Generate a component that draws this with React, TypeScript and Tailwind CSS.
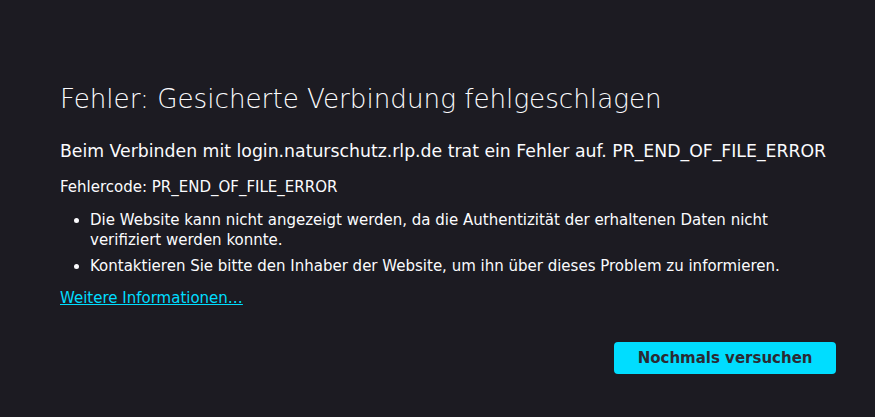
export default function App() {
  return (
    <div
      className="w-[875px] h-[417px] bg-[#1c1b22] text-[#fbfbfe] overflow-hidden"
      style={{ fontFamily: '"DejaVu Sans", sans-serif' }}
    >
      <div className="pl-[60px] pr-[39px] pt-[81px]">
        <h1 className="text-[26.2px] font-extralight leading-[36px] tracking-[0px]">
          Fehler: Gesicherte Verbindung fehlgeschlagen
        </h1>
        <p className="mt-[22px] text-[17.3px] leading-[24px]">
          Beim Verbinden mit login.naturschutz.rlp.de trat ein Fehler auf. PR_END_OF_FILE_ERROR
        </p>
        <p className="mt-[14px] text-[15px] leading-[20px]">Fehlercode: PR_END_OF_FILE_ERROR</p>
        <ul className="mt-[13px] pl-[30px] list-disc text-[15px] leading-[20px]">
          <li className="pr-[60px]">
            Die Website kann nicht angezeigt werden, da die Authentizität der erhaltenen Daten nicht verifiziert werden konnte.
          </li>
          <li className="mt-[6px]">
            Kontaktieren Sie bitte den Inhaber der Website, um ihn über dieses Problem zu informieren.
          </li>
        </ul>
        <a href="#" className="block mt-[12px] w-fit text-[15px] leading-[20px] text-[#00ddff] underline">
          Weitere Informationen…
        </a>
        <div className="flex justify-end mt-[34px]">
          <button className="h-[32px] px-[23.5px] rounded-[4px] bg-[#00ddff] text-[#2b2a33] text-[15px] font-bold">
            Nochmals versuchen
          </button>
        </div>
      </div>
    </div>
  );
}
